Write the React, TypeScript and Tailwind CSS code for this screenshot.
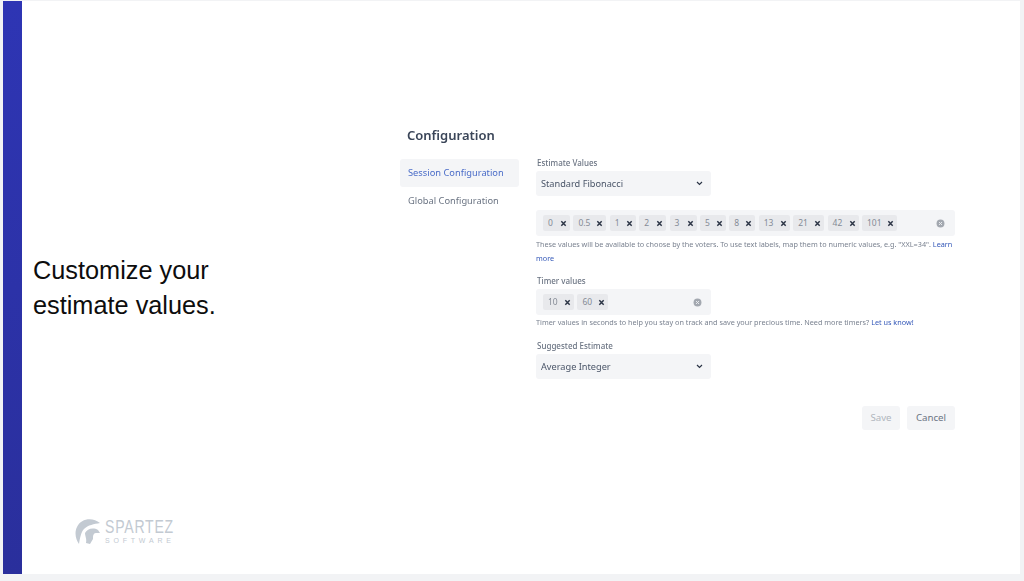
const font = "font-['Noto_Sans',sans-serif]";

const estimateValues = [
  { v: "0", w: "w-[27px]" },
  { v: "0.5", w: "w-[33px]" },
  { v: "1", w: "w-[26px]" },
  { v: "2", w: "w-[27px]" },
  { v: "3", w: "w-[27px]" },
  { v: "5", w: "w-[26px]" },
  { v: "8", w: "w-[26px]" },
  { v: "13", w: "w-[31px]" },
  { v: "21", w: "w-[31px]" },
  { v: "42", w: "w-[31px]" },
  { v: "101", w: "w-[35px]" },
];

function Tag({ v, w }: { v: string; w: string }) {
  return (
    <span className={`flex h-[16px] items-center justify-between rounded-[2px] bg-[#e8e9ec] pl-[4px] pr-[3px] text-[8.5px] text-[#858b96] ${w}`}>
      <span className="pl-[1px]">{v}</span>
      <svg width="7" height="7" viewBox="0 0 8 8" className="text-[#2b3445]">
        <path d="M1.5 1.5l5 5M6.5 1.5l-5 5" stroke="currentColor" strokeWidth="1.7" />
      </svg>
    </span>
  );
}

function ClearIcon() {
  return (
    <svg width="9" height="9" viewBox="0 0 10 10" className="shrink-0">
      <circle cx="5" cy="5" r="4.4" fill="#a3a8b0" />
      <path d="M3.4 3.4l3.2 3.2M6.6 3.4L3.4 6.6" stroke="#eceef1" strokeWidth="1.1" />
    </svg>
  );
}

function Select({ label }: { label: string }) {
  return (
    <div className="flex h-[25px] w-[175px] items-center justify-between rounded-[3px] bg-[#f4f5f7] pl-[5px] pr-[8px] text-[9.2px] text-[#4a5568]">
      <span>{label}</span>
      <svg width="7" height="5" viewBox="0 0 8 6" className="text-[#2b3445]">
        <path d="M1 1.2l3 3 3-3" fill="none" stroke="currentColor" strokeWidth="1.4" />
      </svg>
    </div>
  );
}

function Label({ children }: { children: string }) {
  return <p className="mb-[4px] pl-[1px] text-[8px] font-medium leading-[8px] text-[#6b7483]">{children}</p>;
}

function Help({ children }: { children: React.ReactNode }) {
  return <p className="text-[7.25px] leading-[14px] text-[#7a8290]">{children}</p>;
}

function Logo() {
  return (
    <div className="flex items-center gap-[4px] text-[#c3cad2]">
      <svg width="26" height="27" viewBox="0 0 26 27">
        <path d="M25 5C18-1 6 0 2 9c-3 6-1 13 2 17 1-6 2-12 5-15 4-4 10-5 16-6z" fill="currentColor" />
        <path d="M10 15c2-4 8-6 13-3l2 3h-4c-2 0-3 2-3 4v2l-3 5-4-1c1-4-1-7-1-10z" fill="currentColor" />
      </svg>
      <div className="font-['Liberation_Sans',sans-serif]">
        <p className="origin-left scale-x-[0.78] whitespace-nowrap text-[18px] leading-[15px] tracking-[1px]">SPARTEZ</p>
        <p className="mt-[2px] whitespace-nowrap text-[7px] leading-[7px] tracking-[3.8px]">SOFTWARE</p>
      </div>
    </div>
  );
}

export default function App() {
  return (
    <div className="h-[581px] w-[1024px] overflow-hidden bg-[#f2f3f5] pb-[7px] pl-[3px] pr-[4px] pt-[1px]">
      <div className="flex h-full bg-white">
        <div className="w-[19px] shrink-0 bg-gradient-to-b from-[#2e35b4] to-[#2a2f9c]" />
        <div className="flex w-[378px] shrink-0 flex-col pb-[29px] pl-[11px] pt-[252px]">
          <h2 className="font-['Liberation_Sans',sans-serif] text-[25.3px] leading-[35px] text-[#0d0d0d]">
            Customize your
            <br />
            estimate values.
          </h2>
          <div className="ml-[42px] mt-auto">
            <Logo />
          </div>
        </div>
        <div className={`w-[556px] pt-[124px] blur-[0.5px] ${font}`}>
          <h1 className="pl-[7px] text-[13px] font-semibold leading-[20px] text-[#3a4558]">Configuration</h1>
          <div className="mt-[14px] flex gap-[17px]">
            <nav className="w-[119px] shrink-0 text-[9.3px]">
              <div className="flex h-[28px] items-center rounded-[3px] bg-[#f4f5f7] pl-[8px] text-[#4a6cc8]">
                Session Configuration
              </div>
              <div className="flex h-[28px] items-center pl-[8px] text-[#6b7483]">Global Configuration</div>
            </nav>
            <div className="w-[419px]">
              <Label>Estimate Values</Label>
              <Select label="Standard Fibonacci" />
              <div className="mt-[14px] flex h-[26px] items-center justify-between rounded-[3px] bg-[#f4f5f7] pl-[7px] pr-[10px]">
                <div className="flex gap-[3.4px]">
                  {estimateValues.map((t) => (
                    <Tag key={t.v} v={t.v} w={t.w} />
                  ))}
                </div>
                <ClearIcon />
              </div>
              <div className="mt-[1px] pr-[2px]">
                <Help>
                  These values will be available to choose by the voters. To use text labels, map them to numeric values, e.g. "XXL=34".{" "}
                  <span className="text-[#3458b8]">Learn</span> <span className="text-[#3458b8]">more</span>
                </Help>
              </div>
              <div className="mt-[12px]">
                <Label>Timer values</Label>
              </div>
              <div className="flex h-[26px] w-[175px] items-center justify-between rounded-[3px] bg-[#f4f5f7] pl-[7px] pr-[9px]">
                <div className="flex gap-[3.4px]">
                  <Tag v="10" w="w-[31px]" />
                  <Tag v="60" w="w-[31px]" />
                </div>
                <ClearIcon />
              </div>
              <Help>
                Timer values in seconds to help you stay on track and save your precious time. Need more timers?{" "}
                <span className="text-[#3458b8]">Let us know!</span>
              </Help>
              <div className="mt-[13px]">
                <Label>Suggested Estimate</Label>
              </div>
              <Select label="Average Integer" />
              <div className="mt-[27px] flex justify-end gap-[7px] text-[9.7px]">
                <div className="flex h-[24px] w-[38px] items-center justify-center rounded-[3px] bg-[#f4f5f7] text-[#b0b5bd]">Save</div>
                <div className="flex h-[24px] w-[48px] items-center justify-center rounded-[3px] bg-[#f4f5f7] text-[#6b7483]">Cancel</div>
              </div>
            </div>
          </div>
        </div>
      </div>
    </div>
  );
}
